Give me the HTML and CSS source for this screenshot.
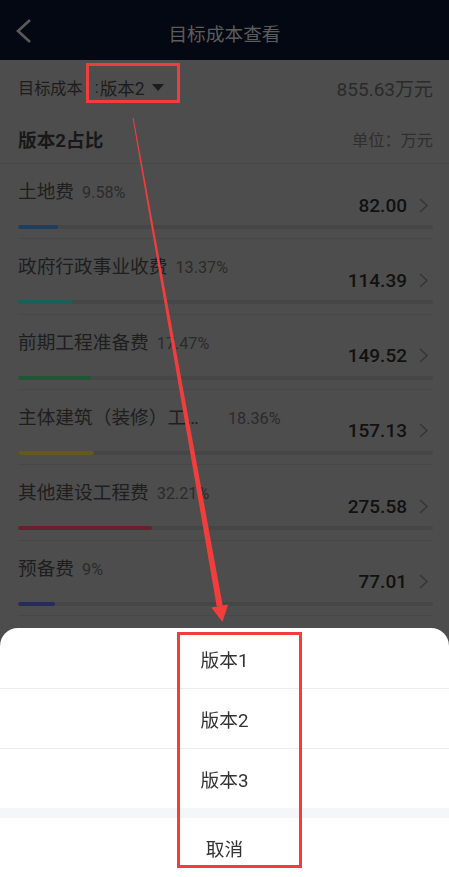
FILE: index.html
```html
<!DOCTYPE html>
<html lang="zh-CN">

<head>
    <meta charset="UTF-8">
    <meta name="viewport" content="width=device-width, initial-scale=1.0">
    <title>目标成本查看</title>

    <link rel="stylesheet" href="styles.css">

</head>

<body>
    <header class="nav">
        <svg class="nav-back" width="16" height="26" viewBox="0 0 16 26">
            <polyline points="14,2 2,13 14,24" fill="none" stroke="#5a5a5a" stroke-width="2.6" />
        </svg>
        <h1 class="nav-title">目标成本查看</h1>
        <span></span>
    </header>

    <div class="summary">
        <span class="summary-label">目标成本<span class="colon">:</span><span class="version-pick">版本2<i class="caret"></i></span></span>
        <span class="summary-total">855.63万元</span>
    </div>

    <div class="section-head">
        <span class="section-title">版本2占比</span>
        <span class="unit">单位：万元</span>
    </div>

    <ul class="cost-list">
        <li class="cost-item">
            <div class="cost-head">
                <div class="cost-name"><span class="name">土地费</span><span class="pct">9.58%</span></div>
                <div class="cost-value"><span class="amount">82.00</span><svg class="chev" viewBox="0 0 9 15"><polyline points="1,1 8,7.5 1,14" /></svg></div>
            </div>
            <div class="bar"><div class="bar-fill blue" style="width: 9.58%"></div></div>
        </li>
        <li class="cost-item">
            <div class="cost-head">
                <div class="cost-name"><span class="name">政府行政事业收费</span><span class="pct">13.37%</span></div>
                <div class="cost-value"><span class="amount">114.39</span><svg class="chev" viewBox="0 0 9 15"><polyline points="1,1 8,7.5 1,14" /></svg></div>
            </div>
            <div class="bar"><div class="bar-fill teal" style="width: 13.37%"></div></div>
        </li>
        <li class="cost-item">
            <div class="cost-head">
                <div class="cost-name"><span class="name">前期工程准备费</span><span class="pct">17.47%</span></div>
                <div class="cost-value"><span class="amount">149.52</span><svg class="chev" viewBox="0 0 9 15"><polyline points="1,1 8,7.5 1,14" /></svg></div>
            </div>
            <div class="bar"><div class="bar-fill green" style="width: 17.47%"></div></div>
        </li>
        <li class="cost-item">
            <div class="cost-head">
                <div class="cost-name"><span class="name name-cut">主体建筑（装修）工程费</span><span class="pct">18.36%</span></div>
                <div class="cost-value"><span class="amount">157.13</span><svg class="chev" viewBox="0 0 9 15"><polyline points="1,1 8,7.5 1,14" /></svg></div>
            </div>
            <div class="bar"><div class="bar-fill olive" style="width: 18.36%"></div></div>
        </li>
        <li class="cost-item">
            <div class="cost-head">
                <div class="cost-name"><span class="name">其他建设工程费</span><span class="pct">32.21%</span></div>
                <div class="cost-value"><span class="amount">275.58</span><svg class="chev" viewBox="0 0 9 15"><polyline points="1,1 8,7.5 1,14" /></svg></div>
            </div>
            <div class="bar"><div class="bar-fill crimson" style="width: 32.21%"></div></div>
        </li>
        <li class="cost-item">
            <div class="cost-head">
                <div class="cost-name"><span class="name">预备费</span><span class="pct">9%</span></div>
                <div class="cost-value"><span class="amount">77.01</span><svg class="chev" viewBox="0 0 9 15"><polyline points="1,1 8,7.5 1,14" /></svg></div>
            </div>
            <div class="bar"><div class="bar-fill navy" style="width: 9%"></div></div>
        </li>
    </ul>

    <!-- action sheet over the dimmed page -->
    <div class="sheet">
        <div class="sheet-option">版本1</div>
        <div class="sheet-option">版本2</div>
        <div class="sheet-option">版本3</div>
        <div class="sheet-gap"></div>
        <div class="sheet-option sheet-cancel">取消</div>
    </div>

    <!-- red review marks drawn on top of the screenshot -->
    <svg class="marks" width="449" height="877" viewBox="0 0 449 877">
        <rect x="87.5" y="64.5" width="91" height="37" />
        <rect x="178.5" y="633.5" width="122" height="233" />
        <polygon class="arrow" points="132.6,118 133.6,118 222.8,606 216.6,606" />
        <polygon class="arrow" points="211.3,607.5 228.1,604.5 222.5,622" />
    </svg>
</body>
</html>
```

FILE: styles.css
```css
body {
    margin: 0;
    width: 449px;
    height: 877px;
    overflow: hidden;
    position: relative;
    background-color: #4d4d4d;
    font-family: Roboto, "Noto Sans CJK SC", sans-serif;
}

.nav {
    height: 60px;
    background-color: #040812;
    display: grid;
    grid-template-columns: 48px 1fr 48px;
    align-items: center;
}

.nav-back {
    margin-left: 16px;
    margin-top: 2px;
}

.nav-title {
    margin: 0;
    padding-top: 5px;
    text-align: center;
    font-size: 18.7px;
    font-weight: 400;
    color: #5c5c5c;
}

.summary {
    height: 54px;
    padding: 0 16px 0 18px;
    display: flex;
    align-items: center;
    justify-content: space-between;
}

.summary-label {
    display: flex;
    align-items: center;
    font-size: 16.2px;
    color: #1c1c1c;
}

.colon {
    margin: 0 1px 0 12px;
}

.version-pick {
    display: inline-flex;
    align-items: center;
    font-size: 17.6px;
}

.caret {
    width: 0;
    height: 0;
    margin-left: 7px;
    border-left: 6px solid transparent;
    border-right: 6px solid transparent;
    border-top: 7px solid #1c1c1c;
}

.summary-total {
    font-size: 19px;
    color: #2a2a2a;
}

.section-head {
    height: 49px;
    padding: 0 16px 0 18px;
    border-bottom: 1px solid #474747;
    display: flex;
    align-items: center;
    justify-content: space-between;
}

.section-title {
    font-size: 18.7px;
    font-weight: 700;
    color: #181818;
}

.unit {
    font-size: 16.2px;
    color: #2f2f2f;
}

.cost-list {
    list-style: none;
    margin: 0;
    padding: 0 16px 0 18px;
}

.cost-item {
    padding: 16px 0 9.33px;
    border-bottom: 1px solid #474747;
}

.cost-head {
    display: flex;
    justify-content: space-between;
}

.cost-name {
    display: flex;
    align-items: center;
    height: 24px;
    min-width: 0;
}

.name {
    font-size: 18.7px;
    line-height: 24px;
    color: #1e1e1e;
    white-space: nowrap;
}

.name-cut {
    max-width: 190px;
    padding-right: 12px;
    overflow: hidden;
    text-overflow: ellipsis;
}

.pct {
    margin-left: 8px;
    padding-top: 1px;
    font-size: 16.2px;
    color: #2b2b2b;
}

.cost-value {
    display: flex;
    align-items: center;
    height: 26px;
    margin-top: 12px;
}

.amount {
    font-size: 19px;
    font-weight: 500;
    color: #111;
}

.chev {
    width: 9px;
    height: 15px;
    margin: 0 5px 0 12px;
    fill: none;
    stroke: #353535;
    stroke-width: 1.4;
}

.bar {
    height: 4px;
    margin-top: 7px;
    border-radius: 2px;
    background-color: #464646;
    overflow: hidden;
}

.bar-fill {
    height: 100%;
    border-radius: 2px;
}

.blue { background-color: #1f3d5f; }
.teal { background-color: #1a5f5a; }
.green { background-color: #1f5634; }
.olive { background-color: #65571f; }
.crimson { background-color: #682030; }
.navy { background-color: #262b5c; }

/* action sheet */
.sheet {
    position: fixed;
    left: 0;
    right: 0;
    bottom: 0;
    background-color: #fff;
    border-radius: 18px 18px 0 0;
    overflow: hidden;
}

.sheet-option {
    height: 60px;
    box-sizing: border-box;
    display: flex;
    align-items: center;
    justify-content: center;
    font-size: 18.7px;
    color: #333;
}

.sheet-option + .sheet-option {
    border-top: 1px solid #eeeeee;
}

.sheet-gap {
    height: 10px;
    background-color: #f5f6f8;
}

.sheet-cancel {
    height: 59px;
}

.marks {
    position: absolute;
    top: 0;
    left: 0;
    z-index: 10;
    pointer-events: none;
}

.marks rect {
    fill: none;
    stroke: #f23d3d;
    stroke-width: 3;
}

.marks .arrow {
    fill: #f23d3d;
}
```
